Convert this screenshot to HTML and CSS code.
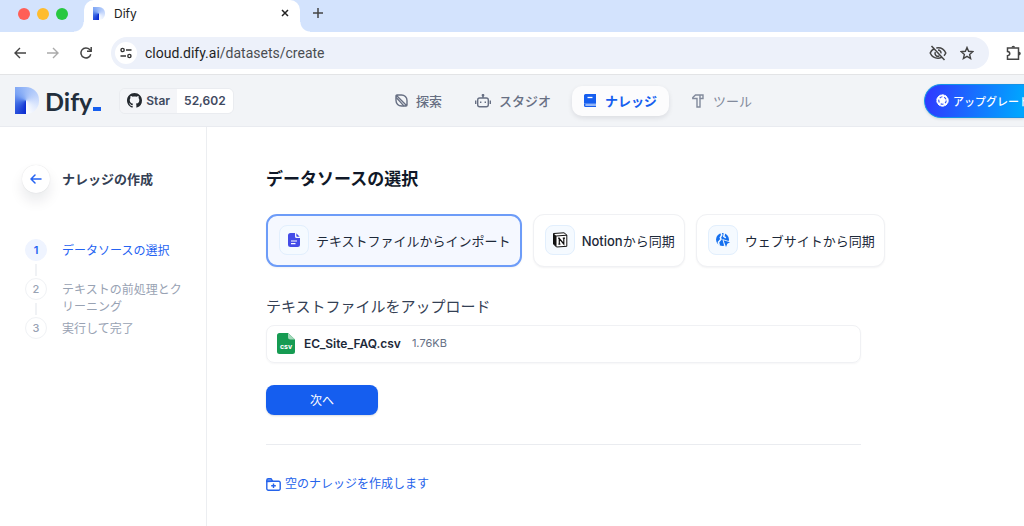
FILE: index.html
```html
<!DOCTYPE html>
<html lang="ja">
<head>
<meta charset="utf-8">
<meta name="viewport" content="width=device-width, initial-scale=1">
<title>Dify</title>
<link rel="stylesheet" href="styles.css">
</head>
<body>
<div class="tabstrip">
  <div class="lights"><i class="red"></i><i class="yellow"></i><i class="green"></i></div>
  <div class="tab">
    <span class="mark small"></span>
    <span class="tab-title">Dify</span>
    <button class="plain" aria-label="タブを閉じる"><svg width="8" height="8" viewBox="0 0 8 8"><path d="M1 1l6 6M7 1L1 7" stroke="#222" stroke-width="1.500"/></svg></button>
  </div>
  <button class="plain newtab" aria-label="新しいタブ"><svg width="10" height="10" viewBox="0 0 10 10"><path d="M5 0v10M0 5h10" stroke="#444" stroke-width="1.500"/></svg></button>
</div>

<div class="toolbar">
  <button class="plain" aria-label="戻る"><svg width="12" height="12" viewBox="0 0 12 12" fill="none" stroke="#444" stroke-width="1.400"><path d="M12 6H1M6 1L1 6l5 5"/></svg></button>
  <button class="plain" aria-label="進む"><svg width="12" height="12" viewBox="0 0 12 12" fill="none" stroke="#aaa" stroke-width="1.400"><path d="M0 6h11M6 1l5 5-5 5"/></svg></button>
  <button class="plain" aria-label="再読み込み"><svg width="12" height="12" viewBox="0 0 12 12" fill="none" stroke="#444" stroke-width="1.500"><path d="M10.800 7.200A5 5 0 1 1 9.700 2.600L11 4"/><path d="M11.200 0v4.300H7"/></svg></button>
  <div class="address">
    <span class="site"><svg width="12" height="12" viewBox="0 0 12 12" fill="none" stroke="#333" stroke-width="1.400"><circle cx="2.600" cy="3" r="1.600"/><path d="M6 3h5.500M.5 9H6"/><circle cx="9.400" cy="9" r="1.600"/></svg></span>
    <span class="url">cloud.dify.ai<span class="path">/datasets/create</span></span>
    <svg width="18" height="16" viewBox="0 0 18 16" fill="none" stroke="#444" stroke-width="1.500"><path d="M5.500 3.500C3.500 4.500 2 6 1.200 8c1.400 3.200 4.300 5.200 7.800 5.200 1.300 0 2.400-.3 3.500-.8M7.300 2.900c4.300-.7 7.900 1.500 9.500 5.100-.4 1-1 1.900-1.800 2.700M2.500 1l13 14M6.300 7a3 3 0 0 0 4 4M9 5a3 3 0 0 1 3 3.300"/></svg>
    <svg width="14" height="14" viewBox="0 0 14 14" fill="none" stroke="#444" stroke-width="1.400"><path d="M7 1.500l1.600 3.800 4.200.4-3.200 2.700 1 4.100L7 10.300l-3.600 2.200 1-4.100L1.200 5.700l4.200-.4z"/></svg>
  </div>
  <svg class="ext" width="16" height="16" viewBox="0 0 16 16" fill="none" stroke="#444" stroke-width="1.500"><path d="M1.500 3h11v11.200h-11v-3.500c3-.2 3-4 0-4.200z"/><path d="M5.500 2.500a1.800 1.800 0 0 1 3.600 0zM13 6.800a1.800 1.800 0 0 1 0 3.600z" fill="#444" stroke="none"/></svg>
</div>

<header class="header">
  <div class="brand">
    <a class="logo" href="#" aria-label="Dify">
      <span class="mark"></span>
      <span class="wordmark">Dify<i></i></span>
    </a>
    <a class="github" href="#">
      <span class="star"><svg width="15" height="15" viewBox="0 0 16 16" fill="#24292f"><path d="M8 0C3.580 0 0 3.580 0 8c0 3.540 2.290 6.530 5.470 7.590.4.070.55-.17.55-.38 0-.19-.01-.82-.01-1.490-2.010.37-2.530-.49-2.690-.94-.09-.23-.48-.94-.82-1.130-.28-.15-.68-.52-.01-.53.63-.01 1.080.58 1.230.82.72 1.210 1.870.87 2.330.66.070-.52.28-.87.510-1.070-1.780-.2-3.640-.89-3.640-3.950 0-.87.310-1.590.82-2.150-.08-.2-.36-1.020.08-2.120 0 0 .67-.21 2.200.82.64-.18 1.320-.27 2-.27s1.360.09 2 .27c1.530-1.040 2.200-.82 2.200-.82.44 1.100.16 1.920.08 2.120.51.56.82 1.270.82 2.150 0 3.070-1.870 3.750-3.650 3.950.29.25.54.73.54 1.480 0 1.070-.01 1.930-.01 2.200 0 .21.15.46.55.38A8.010 8.010 0 0 0 16 8c0-4.420-3.580-8-8-8z"/></svg>Star</span>
      <span class="count">52,602</span>
    </a>
  </div>
  <nav class="nav">
    <a href="#"><svg width="13" height="13" viewBox="0 0 13 13" fill="none" stroke="#676f83" stroke-width="1.400"><path d="M1 4V2a1 1 0 0 1 1-1h4.500A5.500 5.500 0 0 1 12 6.500V11a1 1 0 0 1-1 1H6.500A5.500 5.500 0 0 1 1 6.500zM1.500 1.500l10 10"/><path d="M1 3.500C3.500 5.500 6 9 9 12"/></svg>探索</a>
    <a href="#"><svg width="16" height="14" viewBox="0 0 16 14" fill="none" stroke="#676f83" stroke-width="1.400"><rect x="2.700" y="4" width="10.600" height="8.700" rx="2"/><path d="M8 1v3M.7 6.500v3.500M15.300 6.500v3.500M5.700 7.500v1.500M10.300 7.500v1.500"/><circle cx="8" cy="1.300" r=".7"/></svg>スタジオ</a>
    <a href="#" class="active" aria-current="page"><svg width="12" height="13" viewBox="0 0 12 13"><path d="M1.500 0H12v9.500H0v-8A1.500 1.500 0 0 1 1.500 0z" fill="#155eef"/><path d="M0 9.500h12v1H1.500v1H12V13H1.500A1.500 1.500 0 0 1 0 11.500z" fill="#155eef"/><path d="M1.500 10.500H12v1.200H1.500z" fill="#9dbcf8"/><path d="M3.500 3.500h5" stroke="#fff" stroke-width="1.300"/></svg>ナレッジ</a>
    <a href="#" class="tools"><svg width="12" height="14" viewBox="0 0 12 14" fill="none" stroke="#828a9c" stroke-width="1.400"><path d="M.8 3.500L3.500 1H11v3.500H8V13H5V4.500H.8z"/><path d="M8 1v3.500"/></svg>ツール</a>
  </nav>
  <button class="upgrade"><svg width="13" height="13" viewBox="0 0 13 13"><circle cx="6.500" cy="6.500" r="5.700" fill="#fff" stroke="#fff" stroke-dasharray="3 .58"/><circle cx="6.500" cy="6.500" r="3.700" fill="none" stroke="#3454f8" stroke-width="1.100" stroke-dasharray="2.900 1.750"/><path d="M6.500 4.500l.7 1.300 1.500.2-1.100 1 .3 1.500-1.400-.7-1.400.7.300-1.500-1.100-1 1.500-.2z" fill="#fff"/></svg>アップグレード</button>
</header>

<div class="page">
  <aside class="side">
    <div class="side-head">
      <button class="back" aria-label="戻る"><svg width="12" height="10" viewBox="0 0 12 10" fill="none" stroke="#2563f2" stroke-width="1.500" stroke-linecap="round" stroke-linejoin="round"><path d="M11 5H1M5 1L1 5l4 4"/></svg></button>
      <h2>ナレッジの作成</h2>
    </div>
    <ol class="steps">
      <li class="current"><span class="num">1</span><span class="label">データソースの選択</span></li>
      <li><span class="num">2</span><span class="label">テキストの前処理とクリーニング</span></li>
      <li><span class="num">3</span><span class="label">実行して完了</span></li>
    </ol>
  </aside>
  <main class="main">
    <h1>データソースの選択</h1>
    <div class="sources">
      <button class="source selected"><span class="tile"><svg width="12" height="14" viewBox="0 0 12 14"><path d="M2.500 0H7v3.500A1.500 1.500 0 0 0 8.500 5H12v6.500a2.500 2.500 0 0 1-2.500 2.500h-7A2.500 2.500 0 0 1 0 11.500v-9A2.500 2.500 0 0 1 2.500 0z" fill="#444ce7"/><path d="M8.300.3v2.500c0 .6.300.9.900.9h2.500z" fill="#444ce7"/><path d="M3 8h6M3 10.700h4.500" stroke="#fff" stroke-width="1.200"/></svg></span><span>テキストファイルからインポート</span></button>
      <button class="source"><span class="tile"><svg width="16" height="16" viewBox="0 0 16 16"><path d="M1.500 1.500L12 .8 14.800 3v11.300L4.500 15 1.500 12z" fill="#fff" stroke="#111" stroke-linejoin="round"/><path d="M1.500 1.500l3 2.500v11l-3-3z" fill="#111"/><path d="M4.200 4l10.600-.8" stroke="#111"/><path d="M7.300 12V6.500l4.500 5.500V6.200M6.200 6.400h1.600M10.800 6.200h2.200M6.400 12.200h2" fill="none" stroke="#111" stroke-width="1.200"/></svg></span><span><b>Notion</b>から同期</span></button>
      <button class="source"><span class="tile"><svg width="14" height="14" viewBox="0 0 14 14"><circle cx="6.500" cy="6.500" r="6.500" fill="#1570ef"/><path d="M5 0l.8 2L4.300 4.500l.7 1.700-2.600 3 .9 3.300M8.500 0L7.800 3.500l2 1.300" fill="none" stroke="#f1f8ff" stroke-width="1.500"/><path d="M6.300 6l8 2.500V14H8.500z" fill="#f5faff"/><path d="M7.500 7.200l6.500 2-2.700 1.500L10 14z" fill="#1570ef"/></svg></span><span>ウェブサイトから同期</span></button>
    </div>
    <h3>テキストファイルをアップロード</h3>
    <div class="file">
      <span class="csv"><svg width="18" height="21" viewBox="0 0 18 21"><path d="M2.500 0H11l7 6.500v12a2.500 2.500 0 0 1-2.500 2.500h-13A2.500 2.500 0 0 1 0 18.500v-16A2.500 2.500 0 0 1 2.500 0z" fill="#169b52"/><path d="M11 0l7 6.500h-4.500A2.500 2.500 0 0 1 11 4z" fill="#a3d8ba"/><text x="9" y="15.500" text-anchor="middle" class="csv-text">csv</text></svg></span>
      <span class="name">EC_Site_FAQ.csv</span>
      <span class="size">1.76KB</span>
    </div>
    <button class="next">次へ</button>
    <hr>
    <a class="empty" href="#"><svg width="15" height="13" viewBox="0 0 15 13" fill="none" stroke="#2563eb" stroke-width="1.400" stroke-linejoin="round"><path d="M.8 3.500V2.200A1.400 1.400 0 0 1 2.200.8h3l1.500 2.500z" fill="#8fb3f8"/><path d="M.8 3.300h12a1.400 1.400 0 0 1 1.400 1.400v6a1.500 1.500 0 0 1-1.500 1.500H2.300a1.500 1.500 0 0 1-1.500-1.500zM7.500 5.500v4.500M5.200 7.700h4.600"/></svg>空のナレッジを作成します</a>
  </main>
</div>
</body>
</html>
```
FILE: styles.css
```css
* { box-sizing: border-box; }
body { margin: 0; min-height: 100vh; display: flex; flex-direction: column; overflow: hidden; background: #fff; color: #1d2939; font-family: Inter, "Noto Sans CJK JP", sans-serif; font-size: 13px; }
h1, h2, h3, ol { margin: 0; padding: 0; }
a { color: inherit; text-decoration: none; }
button { font: inherit; color: inherit; border: 0; cursor: pointer; }
svg { display: block; flex: none; }
.plain { display: flex; padding: 0; background: none; }
.mark { flex: none; width: 24px; height: 27px; border-radius: 0 13px 13px 0; background: conic-gradient(from 180deg at 46% 50%, #0a2bd0, #3f6be4 20%, #7ba3f4 35%, #9dbcf8 50%, #bed2fb 68%, #e3ecfe 85%, #fff); }
.mark.small { width: 12px; height: 13px; border-radius: 0 6px 6px 0; }

.tabstrip { display: flex; height: 32px; background: #d3e3fd; }
.lights { display: flex; gap: 7px; width: 84px; padding: 8px 0 0 18px; }
.lights i { width: 12px; height: 12px; border-radius: 50%; }
.red { background: #ff5f57; }
.yellow { background: #febc2e; }
.green { background: #28c840; }
.tab { position: relative; display: flex; align-items: center; width: 216px; padding: 0 11px 6px 9px; background: #fff; border-radius: 10px 10px 0 0; }
.tab::before, .tab::after { content: ""; position: absolute; bottom: 0; width: 10px; height: 10px; }
.tab::before { left: -10px; background: radial-gradient(circle at 0 0, transparent 9px, #fff 10px); }
.tab::after { right: -10px; background: radial-gradient(circle at 100% 0, transparent 9px, #fff 10px); }
.tab-title { flex: 1; margin-left: 9px; font-size: 12px; color: #222; }
.newtab { margin: 8px 0 0 13px; }

.toolbar { display: flex; align-items: center; gap: 21px; height: 43px; padding-left: 14px; border-bottom: 1px solid #e3e4e6; overflow: hidden; background: #fff; }
.address { flex: 1; display: flex; align-items: center; gap: 13px; height: 32px; margin-left: -2px; padding: 0 15px 0 4px; border-radius: 16px; background: #edf1fa; }
.site { display: grid; place-items: center; width: 22px; height: 22px; border-radius: 50%; background: #fff; }
.url { flex: 1; margin-left: -5px; font-family: Roboto, sans-serif; font-size: 14px; color: #1f1f1f; }
.path { color: #4a4d51; }
.ext { margin: 0 2px 0 -4px; }

.header { display: flex; align-items: center; height: 52px; padding-left: 15px; background: #f2f4f7; border-bottom: 1px solid #e9ebf0; }
.brand { display: flex; align-items: center; gap: 18px; width: 372px; }
.logo { display: flex; align-items: center; gap: 6px; }
.wordmark { display: flex; align-items: flex-end; gap: 1px; font-family: Lato, sans-serif; font-size: 25px; line-height: 28px; font-weight: 700; color: #222e3c; }
.wordmark i { width: 8px; height: 4px; margin-bottom: 4px; background: #155eef; }
.github { display: flex; height: 26px; border: 1px solid #eaecf0; border-radius: 6px; overflow: hidden; font-size: 12px; font-weight: 600; color: #3f4a5f; }
.star, .count { display: flex; align-items: center; padding: 0 7px; }
.star { gap: 4px; background: #f4f5f8; }
.count { font-size: 12px; background: #fff; }
.nav { display: flex; align-items: center; gap: 11px; color: #676f83; font-weight: 500; white-space: nowrap; }
.nav a { display: flex; align-items: center; gap: 8px; height: 30px; padding: 0 8px 0 8px; margin-right: 6px; }
.nav .active { gap: 9px; margin: 0 4px 0 -4px; padding: 0 12px; border-radius: 10px; background: #fcfcfd; color: #155eef; font-weight: 700; box-shadow: 0 2px 5px #1018281a; }
.nav .tools { gap: 9px; color: #828a9c; font-weight: 400; }
.upgrade { display: flex; align-items: center; gap: 4px; width: 100px; height: 34px; margin-left: auto; padding: 0 0 0 11px; white-space: nowrap; border: 1px solid #1492e6; border-right: 0; border-radius: 17px 0 0 17px; background: linear-gradient(100deg, #2e3cff 5%, #00a5ff 95%); color: #fff; font-size: 11px; font-weight: 500; box-shadow: 0 1px 3px #10182826; }

.page { flex: 1; display: flex; }
.side { flex: none; width: 207px; padding: 38px 20px 0 22px; border-right: 1px solid #eceef1; }
.side-head { display: flex; align-items: center; gap: 12px; }
.back { display: grid; place-items: center; width: 28px; height: 28px; padding: 0; border-radius: 50%; background: #fff; box-shadow: 0 0 1px #1018282a, 0 8px 14px #10182817; }
.side h2 { font-size: 13px; line-height: 20px; font-weight: 700; color: #344054; }
.steps { list-style: none; margin-top: 46px; padding-left: 3px; }
.steps li { position: relative; display: flex; align-items: flex-start; gap: 15px; min-height: 39px; color: #98a2b3; }
.steps li:not(:last-child)::after { content: ""; position: absolute; left: 10px; top: 25px; width: 2px; height: 12px; background: #f0f2f5; }
.num { flex: none; display: grid; place-items: center; width: 22px; height: 22px; border: 1px solid #f0f2f5; border-radius: 50%; font-size: 11px; font-weight: 500; }
.label { flex: 1; padding-top: 3px; font-size: 12px; line-height: 17px; }
.steps .current { color: #2563f2; }
.current .num { border-color: #eff4ff; background: #eff4ff; font-weight: 600; }

.main { flex: 1; max-width: 694px; padding: 39px 40px 20px 59px; }
h1 { font-size: 17px; line-height: 26px; font-weight: 700; color: #101828; }
.sources { display: flex; gap: 11px; margin-top: 22px; }
.source { flex: none; display: flex; align-items: center; gap: 7px; height: 53px; padding: 0 9px 1px 11px; border: 1px solid #f0f1f4; border-radius: 11px; background: #fff; color: #1d2939; white-space: nowrap; box-shadow: 0 1px 2px #1018280d; }
.source b { font-weight: 500; }
.tile { display: grid; place-items: center; width: 30px; height: 30px; border: 1px solid #e2effd; border-radius: 8px; background: #f5faff; }
.selected { border: 2px solid #6d9cf8; background: #f5f8ff; }
h3 { margin-top: 30px; font-size: 15px; line-height: 20px; font-weight: 400; color: #344054; }
.file { display: flex; align-items: center; height: 38px; margin-top: 8px; padding: 0 10px 2px; border: 1px solid #f0f1f4; border-radius: 8px; box-shadow: 0 1px 2px #1018280a; }
.csv-text { font: 700 7px Inter, sans-serif; fill: #fff; }
.name { margin-left: 9px; font-size: 12px; font-weight: 600; }
.size { margin-left: 11px; font-size: 11px; color: #667085; }
.next { display: block; width: 112px; height: 30px; margin-top: 22px; padding: 0 0 2px; border-radius: 8px; background: #155eef; color: #fff; font-size: 12px; box-shadow: 0 1px 2px #10182826; }
hr { margin: 29px 0 0; border: 0; border-top: 1px solid #eaecf0; }
.empty { display: inline-flex; align-items: center; gap: 4px; margin-top: 30px; color: #2563eb; font-size: 12px; line-height: 18px; }
```
